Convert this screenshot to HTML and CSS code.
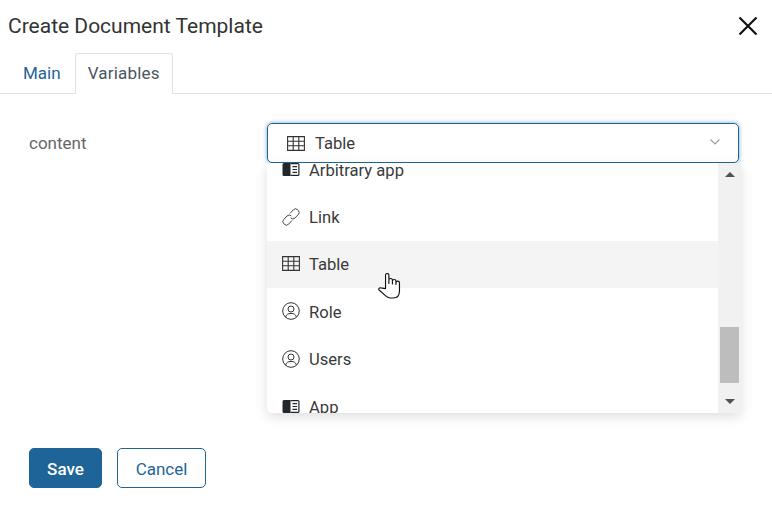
FILE: index.html
```html
<!DOCTYPE html>
<html lang="en">
<head>
    <meta charset="UTF-8">
    <title>Create Document Template</title>
    <link rel="stylesheet" href="styles.css">
</head>
<body>
    <svg class="defs" width="0" height="0">
        <symbol id="i-table" viewBox="0 0 18 15">
            <path d="M.6.6h16.8v13.8H.6zM.6 5.2h16.8M.6 9.8h16.8M6.2.6v13.8M11.8.6v13.8" fill="none" stroke="#333" stroke-width="1.1"/>
        </symbol>
        <symbol id="i-app" viewBox="0 0 17 13">
            <path d="M1.5 0H8v13H1.5A1.5 1.5 0 0 1 0 11.5v-10A1.5 1.5 0 0 1 1.5 0z" fill="#23262b"/>
            <path d="M8 .6h7.5a.9.9 0 0 1 .9.9v10a.9.9 0 0 1-.9.9H8" fill="none" stroke="#23262b" stroke-width="1.2"/>
            <path d="M10 3.6h4.6M10 6.5h4.6M10 9.4h4.6" stroke="#23262b" stroke-width="1.1"/>
        </symbol>
        <symbol id="i-user" viewBox="0 0 18 18">
            <circle cx="9" cy="9" r="8.3" fill="none" stroke="#333" stroke-width="1"/>
            <circle cx="9" cy="7" r="3" fill="none" stroke="#333" stroke-width="1"/>
            <path d="M3.6 15c.6-2.6 2.6-3.6 5.4-3.6s4.800 1 5.400 3.600" fill="none" stroke="#333" stroke-width="1"/>
        </symbol>
        <symbol id="i-link" viewBox="0 0 18 18">
            <g fill="none" stroke="#333" stroke-width="0.9">
                <path d="M8 5.500 11.400 1.800a3 3 0 0 1 4.300 0l.5.5a3 3 0 0 1 0 4.300L13 10a3 3 0 0 1-4.300 0"/>
                <path d="M10 12.500 6.600 16.200a3 3 0 0 1-4.300 0l-.5-.5a3 3 0 0 1 0-4.300L5 8a3 3 0 0 1 4.300 0"/>
            </g>
        </symbol>
    </svg>

    <div class="header">
        <h1>Create Document Template</h1>
        <svg class="close" width="20" height="20" viewBox="0 0 20 20">
            <path d="M1.5 1.5l17 17M18.5 1.5l-17 17" stroke="#111" stroke-width="2.2"/>
        </svg>
    </div>

    <div class="tabs">
        <a class="tab">Main</a>
        <a class="tab active">Variables</a>
    </div>

    <div class="form-row">
        <label class="field-label">content</label>
        <div class="select">
            <svg class="select-icon" width="18" height="15"><use href="#i-table"/></svg>
            <span>Table</span>
            <svg class="caret" width="10" height="6" viewBox="0 0 10 6">
                <path d="M.5.5 5 5 9.500.5" fill="none" stroke="#999" stroke-width="1.1"/>
            </svg>

            <div class="dropdown">
                <div class="options">
                    <ul class="list">
                        <li><svg width="17" height="13"><use href="#i-app"/></svg>Arbitrary app</li>
                        <li><svg width="18" height="18"><use href="#i-link"/></svg>Link</li>
                        <li class="hover"><svg width="18" height="15"><use href="#i-table"/></svg>Table</li>
                        <li><svg width="18" height="18"><use href="#i-user"/></svg>Role</li>
                        <li><svg width="18" height="18"><use href="#i-user"/></svg>Users</li>
                        <li><svg width="17" height="13"><use href="#i-app"/></svg>App</li>
                    </ul>
                </div>
                <div class="scrollbar">
                    <span class="arrow up"></span>
                    <div class="track"><div class="thumb"></div></div>
                    <span class="arrow down"></span>
                </div>
            </div>
        </div>
    </div>

    <div class="buttons">
        <button class="btn primary">Save</button>
        <button class="btn">Cancel</button>
    </div>

    <svg class="hand" width="23" height="26" viewBox="0 0 22 25">
        <path d="M7.200 15V2.100a1.600 1.600 0 0 1 3.200 0V10 7a1.700 1.700 0 0 1 3.400 0v3.500V8a1.700 1.700 0 0 1 3.400 0v3V9.500a1.700 1.700 0 0 1 3.400 0V17c0 4.500-2.500 7-6 7h-3c-2 0-3-.7-4.500-2.200L1 16.300c-.9-1 .3-2.600 1.800-2z" fill="#fff" stroke="#111" stroke-width="1.100" stroke-linejoin="round"/>
    </svg>
</body>
</html>
```

FILE: styles.css
```css
* {
    box-sizing: border-box;
}

body {
    margin: 0;
    height: 515px;
    overflow: hidden;
    font-family: 'Roboto', sans-serif;
    font-size: 16.600px;
    color: #3a3a3a;
    background-color: #fff;
}

.defs {
    display: block;
}

.header {
    display: flex;
    justify-content: space-between;
    align-items: center;
    height: 53px;
    padding: 0 14px 2px 8px;
}

h1 {
    margin: 0;
    font-size: 21px;
    font-weight: 400;
    color: #333;
}

.tabs {
    display: flex;
    height: 41px;
    padding-left: 10px;
    border-bottom: 1px solid #dfe1e3;
    font-size: 17px;
}

.tab {
    height: 41px;
    padding: 10px 13px 0;
    color: #1f6498;
}

.tab.active {
    margin-left: 1px;
    padding: 9px 12px 0;
    letter-spacing: 0.2px;
    color: #4a5560;
    background-color: #fff;
    border: 1px solid #dfe1e3;
    border-bottom: none;
    border-radius: 3px 3px 0 0;
}

.form-row {
    display: flex;
    margin-top: 29px;
    padding-left: 29px;
}

.field-label {
    width: 238px;
    padding-top: 10px;
    font-size: 17px;
    color: #666;
}

.select {
    position: relative;
    display: flex;
    align-items: center;
    width: 472px;
    height: 40px;
    padding: 0 19px;
    border: 1px solid #1f6498;
    border-radius: 5px;
    box-shadow: 0 0 4px rgba(31, 100, 152, 0.6);
}

.select-icon {
    margin-right: 10px;
}

.caret {
    margin-left: auto;
    margin-right: -1px;
    margin-top: -3px;
}

.dropdown {
    position: absolute;
    top: 39px;
    left: -1px;
    display: flex;
    width: 474px;
    height: 250px;
    background-color: #fff;
    border-radius: 0 0 5px 5px;
    box-shadow: 0 4px 12px rgba(0, 0, 0, 0.13);
}

.options {
    flex: 1;
    overflow: hidden;
}

.list {
    margin: -17px 0 0;
    padding: 0;
    list-style: none;
}

.list li {
    display: flex;
    align-items: center;
    height: 47.400px;
    padding: 1px 0 0 15px;
}

.list li svg {
    width: 18px;
    margin: -2px 9px 0 0;
}

.list li.hover {
    background-color: #f4f4f4;
}

.scrollbar {
    display: flex;
    flex-direction: column;
    align-items: center;
    width: 23px;
    padding: 0 2px;
    background-color: #f1f1f1;
}

.arrow {
    flex: none;
    width: 0;
    height: 0;
    border-left: 5px solid transparent;
    border-right: 5px solid transparent;
}

.arrow.up {
    margin: 9px 0 4px;
    border-bottom: 5px solid #505050;
}

.arrow.down {
    margin: 4px 0 9px;
    border-top: 5px solid #505050;
}

.track {
    flex: 1;
    width: 100%;
    padding-top: 146px;
}

.thumb {
    height: 56px;
    background-color: #bdbdbd;
}

.buttons {
    display: flex;
    gap: 15px;
    margin-top: 285px;
    padding-left: 29px;
}

.btn {
    width: 89px;
    height: 40px;
    padding-top: 3px;
    font-family: inherit;
    font-size: 17px;
    color: #1f6498;
    background-color: #fff;
    border: 1px solid #1f6498;
    border-radius: 5px;
}

.btn.primary {
    width: 73px;
    font-weight: 500;
    color: #fff;
    background-color: #1f6498;
}

.hand {
    position: absolute;
    left: 378px;
    top: 273px;
}
```
